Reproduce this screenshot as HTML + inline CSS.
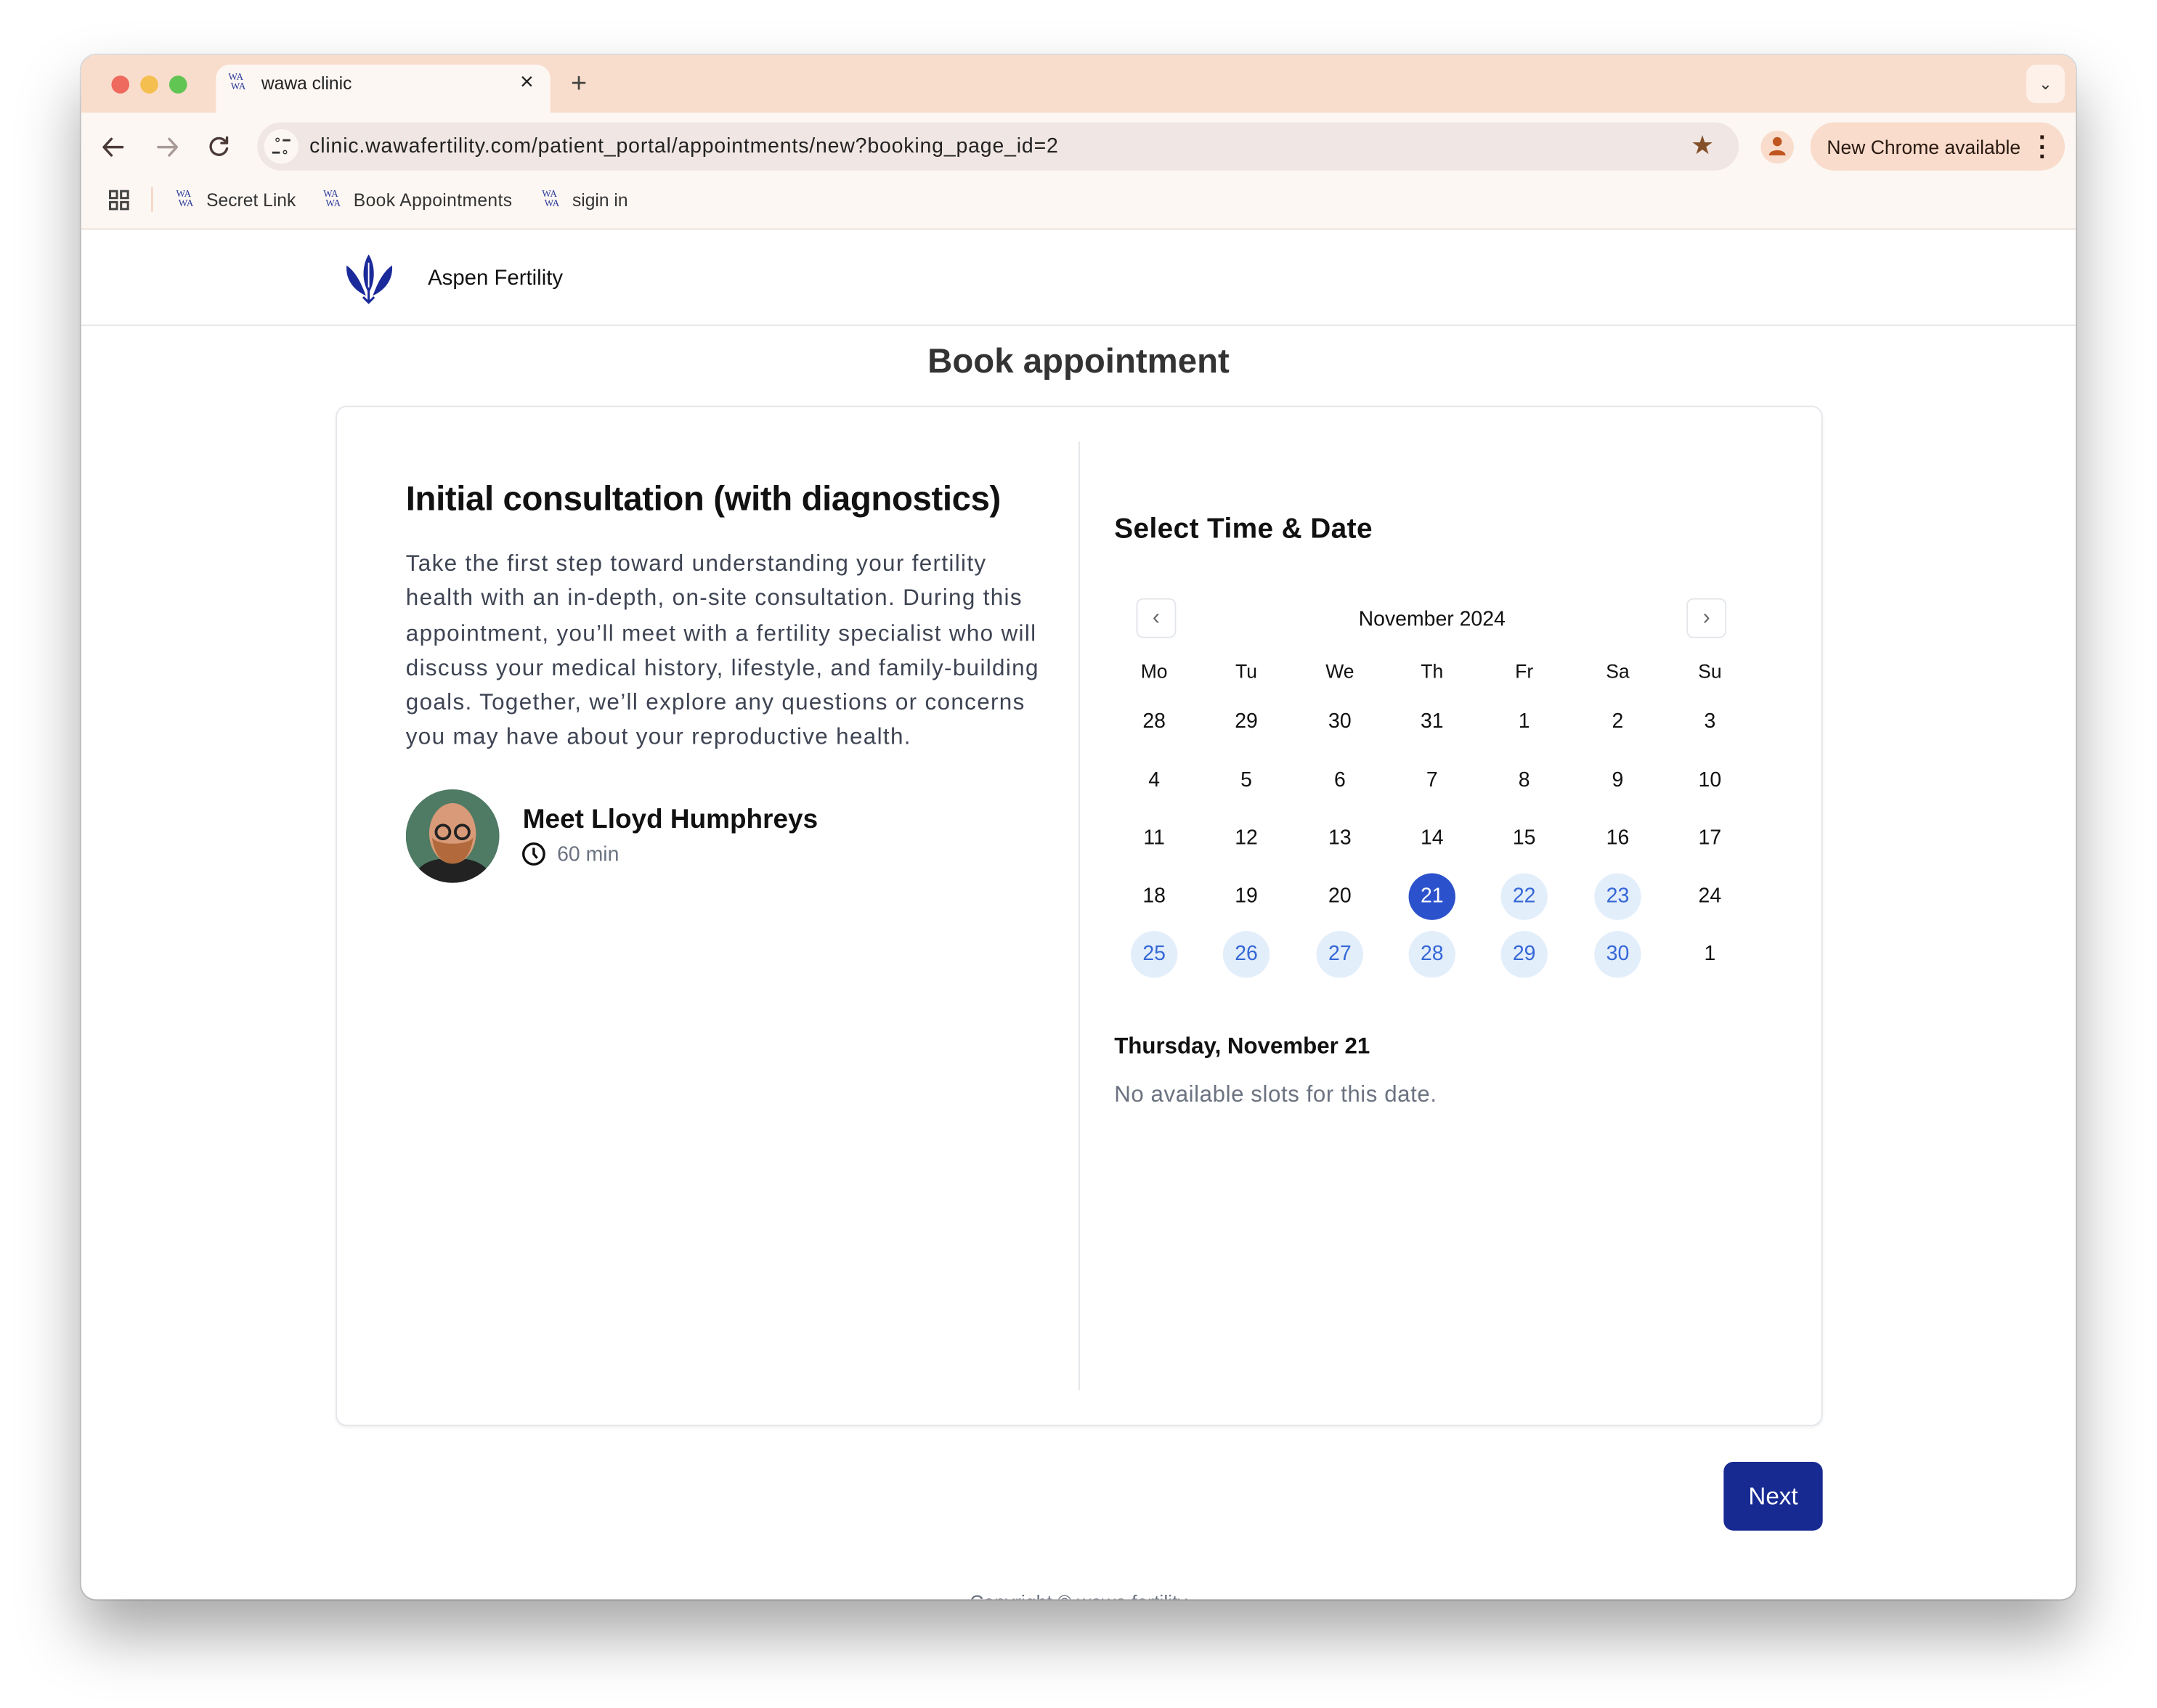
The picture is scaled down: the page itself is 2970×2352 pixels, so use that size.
<!DOCTYPE html>
<html><head><meta charset="utf-8"><style>
*{margin:0;padding:0;box-sizing:border-box}
html,body{width:2970px;height:2352px;overflow:hidden;background:#fff}
#s{position:absolute;left:0;top:0;width:1568px;height:1242px;transform:scale(1.8941,1.8937);transform-origin:0 0;font-family:"Liberation Sans",sans-serif;background:#fff}
.a{position:absolute;white-space:nowrap}
#win{position:absolute;left:59px;top:40px;width:1450px;height:1123px;border-radius:11px;overflow:hidden;background:#fff;box-shadow:0 25px 45px rgba(0,0,0,.35),0 0 0 1px rgba(0,0,0,.12)}
.dot{position:absolute;top:15px;width:13px;height:13px;border-radius:50%}
.c{position:absolute;width:34px;height:34px;margin-left:-17px;margin-top:-17px;border-radius:50%;text-align:center;line-height:34px;font-size:15px;color:#111}
.lt{background:#e3eefb;color:#3567d6}
.sel{background:#2b52cc;color:#fff}
.h{position:absolute;width:40px;margin-left:-20px;text-align:center;font-size:14px;color:#111}
</style></head><body><div id="s">
<div id="win">
 <div class="a" style="left:0;top:0;width:1450px;height:42px;background:#f9ddcc"></div>
 <div class="dot" style="left:22px;background:#ee6a5e"></div>
 <div class="dot" style="left:43px;background:#f5bf4f"></div>
 <div class="dot" style="left:64px;background:#61c554"></div>
 <div class="a" style="left:98px;top:7px;width:243px;height:40px;background:#fdf7f3;border-radius:10px 10px 0 0"></div>
 <div class="a" style="left:107px;top:13px;font-size:7px;line-height:7px;color:#2a3a9a;font-family:'Liberation Serif',serif">WA<br>&nbsp;WA</div>
 <div class="a" style="left:131px;top:13px;font-size:13px;color:#222">wawa clinic</div>
 <div class="a" style="left:319px;top:10px;font-size:17px;color:#222">×</div>
 <div class="a" style="left:356px;top:10px;font-size:20px;color:#444">+</div>
 <div class="a" style="left:1414px;top:7px;width:28px;height:28px;border-radius:7px;background:#fdf1ea;text-align:center;line-height:28px;font-size:12px;color:#333">⌄</div>
 <div class="a" style="left:0;top:42px;width:1450px;height:85px;background:#fdf7f3;border-bottom:1px solid #eee1da"></div>
 <svg class="a" style="left:14px;top:57px" width="170" height="20" viewBox="0 0 170 20"><g fill="none" stroke="#4a3a35" stroke-width="1.8" stroke-linecap="round" stroke-linejoin="round"><path d="M16 10H3M8 4L2.5 10 8 16"/><path d="M42 10H55M50 4l5.5 6-5.5 6" stroke="#a89a94"/><path d="M91 6a6 6 0 1 0 1 5M92 3v4h-4"/></g></svg>
 <div class="a" style="left:128px;top:49px;width:1077px;height:35px;border-radius:18px;background:#f0e6e3"></div>
 <div class="a" style="left:133px;top:54px;width:25px;height:25px;border-radius:50%;background:#fdf7f3;font-size:9px;line-height:9px;text-align:center;padding-top:4px;color:#333">⚬━<br>━⚬</div>
 <div class="a" style="left:166px;top:58px;font-size:15px;letter-spacing:.45px;color:#222">clinic.wawafertility.com/patient_portal/appointments/new?booking_page_id=2</div>
 <div class="a" style="left:1170px;top:55px;font-size:19px;color:#84502a">★</div>
 <div class="a" style="left:1221px;top:55px;width:24px;height:24px;border-radius:50%;background:#f9dccb"></div>
 <svg class="a" style="left:1226px;top:58px" width="14" height="16"><circle cx="7" cy="5" r="3.3" fill="#bf5620"/><path d="M1 15c0-5 12-5 12 0z" fill="#bf5620"/></svg>
 <div class="a" style="left:1257px;top:49px;width:185px;height:35px;border-radius:18px;background:#f9dccb"></div>
 <div class="a" style="left:1269px;top:59px;font-size:14px;color:#2a1a12">New Chrome available</div>
 <div class="a" style="left:1423px;top:57px;font-size:18px;line-height:7px;color:#2a1a12;font-weight:bold">·<br>·<br>·</div>
 <svg class="a" style="left:20px;top:98px" width="16" height="16"><g fill="none" stroke="#444" stroke-width="1.6"><rect x="1" y="1" width="5" height="5"/><rect x="9" y="1" width="5" height="5"/><rect x="1" y="9" width="5" height="5"/><rect x="9" y="9" width="5" height="5"/></g></svg>
 <div class="a" style="left:51px;top:96px;width:1px;height:18px;background:#f0c8b4"></div>
 <div class="a" style="left:69px;top:98px;font-size:7px;line-height:7px;color:#2a3a9a;font-family:'Liberation Serif',serif">WA<br>&nbsp;WA</div>
 <div class="a" style="left:91px;top:98px;font-size:13px;color:#333">Secret Link</div>
 <div class="a" style="left:176px;top:98px;font-size:7px;line-height:7px;color:#2a3a9a;font-family:'Liberation Serif',serif">WA<br>&nbsp;WA</div>
 <div class="a" style="left:198px;top:98px;font-size:13px;letter-spacing:.2px;color:#333">Book Appointments</div>
 <div class="a" style="left:335px;top:98px;font-size:7px;line-height:7px;color:#2a3a9a;font-family:'Liberation Serif',serif">WA<br>&nbsp;WA</div>
 <div class="a" style="left:357px;top:98px;font-size:13px;color:#333">sigin in</div>
 <div class="a" style="left:0;top:196px;width:1450px;height:1px;background:#e2e4e8"></div>
 <svg class="a" style="left:189px;top:143px" width="42" height="40" viewBox="0 0 42 40"><g fill="#1b2a9a"><path d="M20 2C15 10 15 22 20 30 25 22 25 10 20 2z"/><path d="M4 10C3 20 9 28 18 32 15 24 11 15 4 10z"/><path d="M37 10C38 20 32 28 23 32 26 24 30 15 37 10z"/></g><path d="M20 22v15M16 33l4 4 4-4" stroke="#1b2a9a" stroke-width="1.6" fill="none"/><path d="M20 8v18" stroke="#fff" stroke-width="1"/></svg>
 <div class="a" style="left:252px;top:154px;font-size:15.5px;color:#111">Aspen Fertility</div>
 <div class="a" style="left:0;top:209px;width:1450px;text-align:center;font-size:25px;font-weight:bold;color:#333">Book appointment</div>
 <div class="a" style="left:185px;top:255px;width:1081px;height:742px;border:1px solid #e3e6ea;border-radius:8px;box-shadow:0 1px 2px rgba(0,0,0,.06)"></div>
 <div class="a" style="left:725px;top:281px;width:1px;height:690px;background:#e3e6ea"></div>
 <div class="a" style="left:236px;top:309px;font-size:25px;font-weight:bold;color:#111;letter-spacing:-.2px">Initial consultation (with diagnostics)</div>
 <div class="a" style="left:236px;top:357px;font-size:16.6px;line-height:25.3px;letter-spacing:.7px;color:#3e4453">Take the first step toward understanding your fertility<br>health with an in-depth, on-site consultation. During this<br>appointment, you’ll meet with a fertility specialist who will<br>discuss your medical history, lifestyle, and family-building<br>goals. Together, we’ll explore any questions or concerns<br>you may have about your reproductive health.</div>
 <svg class="a" style="left:236px;top:534px" width="68" height="68"><defs><clipPath id="cp"><circle cx="34" cy="34" r="34"/></clipPath></defs><g clip-path="url(#cp)"><rect width="68" height="68" fill="#4f7a64"/><path d="M5 68c2-14 14-18 29-18s27 4 29 18z" fill="#222"/><ellipse cx="34" cy="32" rx="17" ry="22" fill="#d89a78"/><path d="M19 35c2 14 8 19 15 19s13-5 15-19c-4 6-26 6-30 0z" fill="#b26a3c"/><circle cx="27" cy="31" r="5" fill="none" stroke="#222" stroke-width="2"/><circle cx="41" cy="31" r="5" fill="none" stroke="#222" stroke-width="2"/></g></svg>
 <div class="a" style="left:321px;top:545px;font-size:19.5px;font-weight:bold;color:#111">Meet Lloyd Humphreys</div>
 <svg class="a" style="left:320px;top:572px" width="18" height="18"><circle cx="9" cy="9" r="7.5" fill="none" stroke="#111" stroke-width="1.8"/><path d="M9 4.5V9l2.5 3" stroke="#111" stroke-width="1.8" fill="none"/></svg>
 <div class="a" style="left:346px;top:573px;font-size:15px;color:#6b7280">60 min</div>
 <div class="a" style="left:751px;top:333px;font-size:20.5px;font-weight:bold;color:#111;letter-spacing:.2px">Select Time &amp; Date</div>
 <div class="a" style="left:767px;top:395px;width:29px;height:29px;border:1px solid #e3e6ea;border-radius:5px;text-align:center;line-height:27px;color:#666;font-size:16px">‹</div>
 <div class="a" style="left:1167px;top:395px;width:29px;height:29px;border:1px solid #e3e6ea;border-radius:5px;text-align:center;line-height:27px;color:#666;font-size:16px">›</div>
 <div class="a" style="left:882px;top:402px;width:200px;text-align:center;font-size:15px;color:#111">November 2024</div>
 <div id="cal"></div>
 <div class="a" style="left:751px;top:712px;font-size:16.5px;font-weight:bold;color:#111">Thursday, November 21</div>
 <div class="a" style="left:751px;top:747px;font-size:16.5px;letter-spacing:.3px;color:#6b7280">No available slots for this date.</div>
 <div class="a" style="left:1194px;top:1023px;width:72px;height:50px;border-radius:7px;background:#172a92;color:#fff;text-align:center;line-height:50px;font-size:17.5px">Next</div>
 <div class="a" style="left:0;top:1117px;width:1450px;text-align:center;font-size:14px;color:#6b7280">Copyright © wawa fertility</div>
</div>
</div>
<script>
var xs=[780,847,915,982,1049,1117,1184],ys=[465,508,550,592,634],c=document.getElementById('cal'),h='';
['Mo','Tu','We','Th','Fr','Sa','Su'].forEach(function(d,i){h+='<div class="h" style="left:'+xs[i]+'px;top:440px">'+d+'</div>'});
var rows=[[28,29,30,31,1,2,3],[4,5,6,7,8,9,10],[11,12,13,14,15,16,17],[18,19,20,21,22,23,24],[25,26,27,28,29,30,1]];
rows.forEach(function(r,ri){r.forEach(function(d,i){var cl='c';if(ri==3&&i==3)cl+=' sel';else if((ri==3&&(i==4||i==5))||(ri==4&&i<6))cl+=' lt';h+='<div class="'+cl+'" style="left:'+xs[i]+'px;top:'+(ys[ri]+20)+'px">'+d+'</div>'})});
c.outerHTML=h;
</script>
</body></html>
